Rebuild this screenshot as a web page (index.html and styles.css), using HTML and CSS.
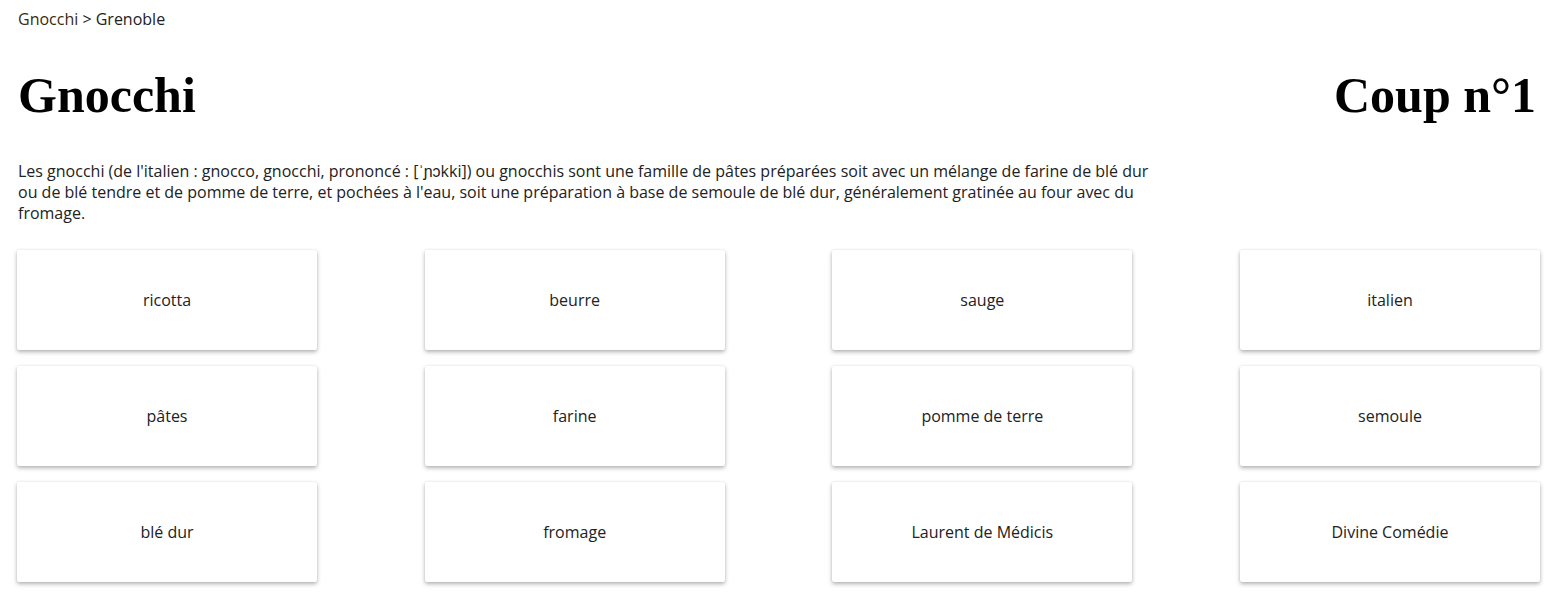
FILE: index.html
```html
<!DOCTYPE html>
<html lang="fr">
<head>
<meta charset="utf-8">
<link rel="stylesheet" href="styles.css">
</head>
<body>
<div class="page">
  <nav class="crumbs"><a href="#">Gnocchi</a> &gt; Grenoble</nav>
  <header class="head">
    <h1>Gnocchi</h1>
    <h1>Coup n°1</h1>
  </header>
  <p class="desc">Les gnocchi (de l'italien : gnocco, gnocchi, prononcé : [ˈɲɔkki]) ou gnocchis sont une famille de pâtes préparées soit avec un mélange de farine de blé dur ou de blé tendre et de pomme de terre, et pochées à l'eau, soit une préparation à base de semoule de blé dur, généralement gratinée au four avec du fromage.</p>
  <div class="grid">
    <div class="card">ricotta</div>
    <div class="card">beurre</div>
    <div class="card">sauge</div>
    <div class="card">italien</div>
    <div class="card">pâtes</div>
    <div class="card">farine</div>
    <div class="card">pomme de terre</div>
    <div class="card">semoule</div>
    <div class="card">blé dur</div>
    <div class="card">fromage</div>
    <div class="card">Laurent de Médicis</div>
    <div class="card">Divine Comédie</div>
  </div>
</div>
</body>
</html>
```

FILE: styles.css
```css
html, body { margin: 0; padding: 0; background: #fff; }
body { font-family: "Open Sans", sans-serif; color: #222; font-size: 16px; }
.page { padding: 8px 10px 10px 17px; }
.crumbs { line-height: 22px; color: #222; padding-left: 1px; }
.crumbs a { color: #3a2a10; text-decoration: none; }
.head { display: flex; justify-content: space-between; align-items: baseline; margin-top: 35px; padding: 0 4px 0 1px; }
.head h1 { margin: 0; font-family: "Liberation Serif", serif; font-weight: bold; font-size: 50px; line-height: 60px; color: #000; }
.desc { margin: 36px 0 0 1px; max-width: 1150px; font-size: 16px; line-height: 21px; color: #222; }
.grid { display: grid; grid-template-columns: repeat(4, 300px); justify-content: space-between; row-gap: 16px; margin-top: 26px; width: 1523px; }
.card { height: 100px; display: flex; align-items: center; justify-content: center; background: #fff; border-radius: 2px; box-shadow: 0 2px 4px rgba(0,0,0,0.3), 0 0 2px rgba(0,0,0,0.08); font-size: 16px; color: #222; }
```
